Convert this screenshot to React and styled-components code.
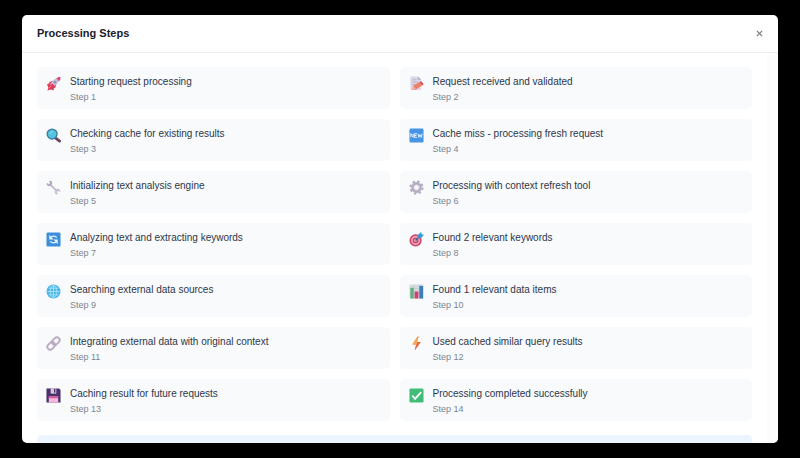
import React from "react";
import styled, { createGlobalStyle } from "styled-components";

//Icon drawings
const icons = {
  rocket: (
    <>
      <path d="M8 12l6-2 4 4-8 5-7 0z" fill="#e0526f" />
      <path d="M20 24l2-6-4-4-5 8 0 8z" fill="#d8415f" />
      <path d="M9 18C13 9 20 4 29 3c0 9-6 16-15 20z" fill="#c9bcdb" />
      <path d="M22 5c2-2 5-3 9-3 0 4-1 7-3 9z" fill="#e8476a" />
      <circle cx="19" cy="13" r="3" fill="#7f9cc4" />
      <path d="M2 17l7 2 5-3 4 5-3 4 2 6-7-2-7 2 2-6z" fill="#e23c58" />
      <path d="M6 26l6-6" stroke="#f58a8a" strokeWidth="2" />
    </>
  ),
  memo: (
    <>
      <path d="M3 1h16l7 7v22H3z" fill="#dcd7e4" />
      <path d="M19 1v7h7z" fill="#b5aac4" />
      <path d="M7 8h9M7 13h12M7 18h7" stroke="#b9b2c6" strokeWidth="2" />
      <path d="M7 30l2-9 14-9 6 7-14 10z" fill="#ee8068" />
      <path d="M7 30l2-9 6 8z" fill="#f5b19b" />
      <path d="M23 12l3-1 5 6-2 3z" fill="#cf4450" />
    </>
  ),
  magnifier: (
    <>
      <path d="M20 21l9 7" stroke="#6b4560" strokeWidth="6" strokeLinecap="round" />
      <circle cx="13" cy="13" r="12" fill="#3e7f9e" />
      <circle cx="13" cy="13" r="9" fill="#55c3e2" />
      <path d="M8 12c1-3 3-4 6-4" stroke="#9be5f2" strokeWidth="2" fill="none" />
    </>
  ),
  fresh: (
    <>
      <rect x="1" y="1" width="30" height="30" rx="3" fill="#4793e4" />
      <path
        d="M4 20v-8l5 8v-8M17 12h-5v8h5M12 16h4M19 12l2 8 2.500-6 2.500 6 2-8"
        stroke="#e9f4ff"
        strokeWidth="2"
        fill="none"
      />
    </>
  ),
  wrench: (
    <>
      <path d="M8 9l16 15" stroke="#c6bcd1" strokeWidth="4" />
      <path
        d="M2 6l4 3 3-3-3-4c5-2 9 2 7 7l-4 4C4 14 0 11 2 6z"
        fill="#b3a9c0"
      />
      <path
        d="M30 26l-4-3-3 3 3 4c-5 2-9-2-7-7l4-4c5-1 9 2 7 7z"
        fill="#c9bed3"
      />
    </>
  ),
  gear: (
    <>
      <circle
        cx="16"
        cy="16"
        r="13"
        fill="none"
        stroke="#b3a8c1"
        strokeWidth="4"
        strokeDasharray="5.100 5.110"
      />
      <circle cx="16" cy="16" r="9" fill="none" stroke="#b5aac2" strokeWidth="5" />
      <circle cx="16" cy="16" r="6" fill="#f6f5fa" stroke="#9c91ab" strokeWidth="1" />
    </>
  ),
  refresh: (
    <>
      <rect x="1" y="1" width="30" height="30" rx="3" fill="#3e8edb" />
      <path
        d="M9 13c3-5 10-6 14-1M23 19c-3 5-10 6-14 1"
        stroke="#e4f3ff"
        strokeWidth="3"
        fill="none"
      />
      <path d="M7 6v10h9zM25 26V16h-9z" fill="#e4f3ff" />
    </>
  ),
  target: (
    <>
      <circle cx="14" cy="18" r="13" fill="#d34468" />
      <circle cx="14" cy="18" r="8" fill="none" stroke="#efb6c6" strokeWidth="3" />
      <circle cx="14" cy="18" r="3" fill="#efb6c6" />
      <path d="M14 18L25 7" stroke="#356c9e" strokeWidth="3" />
      <path d="M19 10l1-5 6-5 1 5 5 1-6 7-5 1z" fill="#359bd3" />
    </>
  ),
  globe: (
    <>
      <circle cx="16" cy="16" r="15" fill="#4db8e7" />
      <path
        d="M16 3v26M3 16h26M6 9h20M6 23h20"
        stroke="#a5e0f8"
        strokeWidth="2"
      />
      <ellipse
        cx="16"
        cy="16"
        rx="7"
        ry="13"
        fill="none"
        stroke="#a5e0f8"
        strokeWidth="2"
      />
    </>
  ),
  chart: (
    <>
      <rect x="1" y="1" width="30" height="30" rx="2" fill="#d6dce2" />
      <path d="M1 10h30M1 20h30M11 1v30M21 1v30" stroke="#b9c3c9" />
      <rect x="3" y="8" width="7" height="23" fill="#5fb07b" />
      <rect x="12" y="16" width="8" height="15" fill="#db3d70" />
      <rect x="22" y="4" width="8" height="27" fill="#3b7fb6" />
    </>
  ),
  link: (
    <g fill="none" stroke="#b9aac1" strokeWidth="4">
      <rect x="12" y="5" width="18" height="12" rx="6" transform="rotate(-45 21 11)" />
      <rect x="2" y="15" width="18" height="12" rx="6" transform="rotate(-45 11 21)" />
    </g>
  ),
  bolt: (
    <>
      <path d="M18 1L7 18h8l-3 13 13-18h-8l4-12z" fill="#f28b50" />
      <path d="M18 1L7 18h8l3-5z" fill="#f8aa58" />
      <path d="M12 31l13-18h-6l-4 8z" fill="#e46549" />
    </>
  ),
  floppy: (
    <>
      <path d="M1 1h27l3 3v27H1z" fill="#4b306c" />
      <rect x="10" y="1" width="12" height="11" fill="#d9cce2" />
      <rect x="17" y="2" width="3" height="8" fill="#4b306c" />
      <rect x="6" y="18" width="20" height="13" fill="#f4b9dc" />
      <path d="M6 18h20v4H6z" fill="#d956a0" />
    </>
  ),
  check: (
    <>
      <rect x="1" y="1" width="30" height="30" rx="3" fill="#42bd78" />
      <path d="M7 16l6 7L26 9" stroke="#fff" strokeWidth="4" fill="none" />
    </>
  ),
};

const steps = [
  { icon: "rocket", title: "Starting request processing" },
  { icon: "memo", title: "Request received and validated" },
  { icon: "magnifier", title: "Checking cache for existing results" },
  { icon: "fresh", title: "Cache miss - processing fresh request" },
  { icon: "wrench", title: "Initializing text analysis engine" },
  { icon: "gear", title: "Processing with context refresh tool" },
  { icon: "refresh", title: "Analyzing text and extracting keywords" },
  { icon: "target", title: "Found 2 relevant keywords" },
  { icon: "globe", title: "Searching external data sources" },
  { icon: "chart", title: "Found 1 relevant data items" },
  { icon: "link", title: "Integrating external data with original context" },
  { icon: "bolt", title: "Used cached similar query results" },
  { icon: "floppy", title: "Caching result for future requests" },
  { icon: "check", title: "Processing completed successfully" },
];

function Step({ icon, title, number }) {
  return (
    <StyledStep>
      <StepIcon viewBox="0 0 32 32" aria-hidden="true">
        {icons[icon]}
      </StepIcon>
      <div>
        <StepTitle>{title}</StepTitle>
        <StepNumber>Step {number}</StepNumber>
      </div>
    </StyledStep>
  );
}

function App() {
  return (
    <>
      <GlobalStyle />
      <Overlay>
        <Modal role="dialog" aria-labelledby="steps-title">
          <Header>
            <h2 id="steps-title">Processing Steps</h2>
            <CloseButton type="button" aria-label="Close">
              <svg viewBox="0 0 8 8" aria-hidden="true">
                <path d="M1 1l6 6M7 1L1 7" />
              </svg>
            </CloseButton>
          </Header>
          <Body>
            <Content>
              <StepList>
                {steps.map((step, index) => (
                  <Step key={step.icon} {...step} number={index + 1} />
                ))}
              </StepList>
              <Summary />
            </Content>
            <ScrollTrack />
          </Body>
        </Modal>
      </Overlay>
    </>
  );
}

//Styled components
const GlobalStyle = createGlobalStyle`
  * {
    box-sizing: border-box;
    margin: 0;
    padding: 0;
  }
  body {
    background: #000;
    font-family: "Liberation Sans", Arial, sans-serif;
  }
`;

const Overlay = styled.div`
  display: flex;
  height: 100vh;
  padding: 15px 22px;
`;

const Modal = styled.section`
  flex: 1;
  display: flex;
  flex-direction: column;
  min-width: 0;
  overflow: hidden;
  background: #fff;
  border-radius: 5px;
`;

const Header = styled.header`
  display: flex;
  align-items: center;
  justify-content: space-between;
  flex-shrink: 0;
  padding: 10px 15px 11px;
  border-bottom: 1px solid #eceef1;
  h2 {
    font-size: 11px;
    line-height: 16px;
    font-weight: 700;
    color: #1a202c;
  }
`;

const CloseButton = styled.button`
  display: flex;
  border: none;
  background: none;
  cursor: pointer;
  svg {
    width: 7px;
    height: 7px;
    stroke: #7b7f86;
    stroke-width: 1.5;
  }
`;

const Body = styled.div`
  flex: 1;
  display: flex;
  min-height: 0;
  overflow: hidden;
`;

const Content = styled.div`
  flex: 1;
  padding: 14px 15px;
`;

const ScrollTrack = styled.div`
  width: 11px;
  background: #fcfcfc;
`;

const StepList = styled.ol`
  display: grid;
  grid-template-columns: 1fr 1fr;
  gap: 10px;
  list-style: none;
`;

const StyledStep = styled.li`
  display: flex;
  align-items: flex-start;
  gap: 9px;
  padding: 8px 9px 6px;
  background: #f8fafc;
  border-radius: 5px;
`;

const StepIcon = styled.svg`
  flex-shrink: 0;
  width: 15px;
  height: 15px;
  margin-top: 1px;
`;

const StepTitle = styled.p`
  font-size: 10px;
  line-height: 14px;
  color: #2d3748;
`;

const StepNumber = styled.p`
  margin-top: 2px;
  font-size: 9px;
  line-height: 12px;
  color: #7c8592;
`;

const Summary = styled.div`
  height: 60px;
  margin-top: 14px;
  background: #ebf4ff;
  border-radius: 5px;
`;

export default App;
